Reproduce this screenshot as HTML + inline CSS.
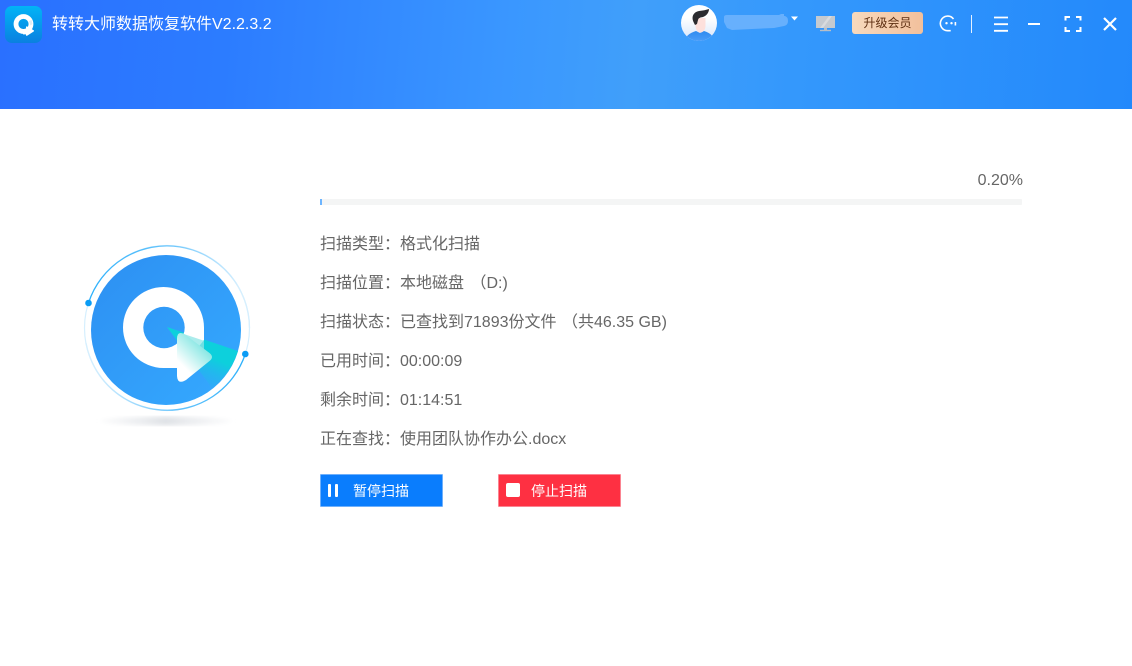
<!DOCTYPE html>
<html><head><meta charset="utf-8"><style>
*{margin:0;padding:0;box-sizing:border-box}
html,body{width:1132px;height:666px;overflow:hidden;background:#fff}
body{position:relative;font-family:"Liberation Sans","Noto Sans CJK SC",sans-serif}
.hd{position:absolute;left:0;top:0;width:1132px;height:109px;background:linear-gradient(95deg,#2a70ff 0%,#2c7cff 20%,#3a97ff 45%,#409ffa 56%,#3498fc 70%,#2389fb 100%)}
.t{position:absolute;white-space:nowrap}
.title{left:52px;top:13px;font-size:16px;line-height:24px;color:#fff}
.row{left:320px;font-size:16px;line-height:22px;color:#666}
.btn{position:absolute;top:474px;width:123px;height:33px;border-radius:1px}
.btn span{position:absolute;left:32px;top:6px;font-size:14px;line-height:20px;color:#fff;white-space:nowrap}
svg{position:absolute}
</style></head><body>
<div class="hd"></div>
<svg style="left:5px;top:6px" width="37" height="37" viewBox="0 0 37 37">
<defs><linearGradient id="a" x1="0" y1="0" x2="0" y2="1"><stop offset="0" stop-color="#02b4f6"/><stop offset="1" stop-color="#0a80e0"/></linearGradient></defs>
<rect width="37" height="37" rx="7" fill="url(#a)"/>
<circle cx="18.500" cy="18" r="7.500" fill="none" stroke="#fff" stroke-width="4.800"/>
<path d="M18 23h4v5.400h-4z" fill="#fff"/>
<path d="M22 20.500Q21 20 21 21V29Q21 30.500 22.500 29.500L28.700 25.500Q29.500 25 28.700 24.300z" fill="#fff"/>
<path d="M24 15l2.500-1 1 4-2 1.500z" fill="#cfe6f4" opacity=".7"/>
</svg>
<div class="t title">转转大师数据恢复软件V2.2.3.2</div>

<svg style="left:681px;top:5px" width="36" height="36" viewBox="0 0 36 36">
<defs><clipPath id="c"><circle cx="18" cy="18" r="18"/></clipPath><linearGradient id="w" x1="0" y1="0" x2="0" y2="1"><stop offset=".35" stop-color="#fff"/><stop offset="1" stop-color="#d5e5fb"/></linearGradient><linearGradient id="bd" x1="0" y1="0" x2="0" y2="1"><stop offset="0" stop-color="#2f8bf0"/><stop offset="1" stop-color="#4a9cf8"/></linearGradient></defs>
<circle cx="18" cy="18" r="18" fill="url(#w)"/>
<g clip-path="url(#c)">
<path d="M4 36c0-4 4-8 11-10l4 2 4-2c7 2 10 6 10 10z" fill="url(#bd)"/>
<path d="M14.500 13h10v8c0 3-2 6.500-5 6.500s-5-3.500-5-6.500z" fill="#fde0dc"/>
<path d="M12.500 17C10 11 13 7 18 6C22 5.500 25 5 28 4C28 8 25 11 22 12C19 12.500 17.500 13 17 15L16 19L14 20Z" fill="#2b2b2f"/>
</g></svg>
<svg style="left:724px;top:14px" width="70" height="18" viewBox="0 0 70 18">
<path d="M0 3q0-2 3-2h52l2-1h3v2h1q3 1 3 5q0 4-4 5l-10 2-22 1-20 1-5-2-3-6z" fill="#67b0fd"/>
</svg>
<svg style="left:790px;top:16px" width="9" height="6" viewBox="0 0 9 6"><path d="M1 .500h7l-3.500 4z" fill="#fff"/></svg>
<svg style="left:815px;top:15px" width="21" height="17" viewBox="0 0 21 17">
<rect x="1" y="1" width="19" height="12" fill="#c5cad0"/><path d="M5 13 14 1h3L8 13z" fill="#d8dbde"/>
<rect x="9" y="13" width="3" height="2" fill="#b7bec6"/><rect x="5" y="14.800" width="11" height="1.400" fill="#b7bec6"/>
</svg>
<div style="position:absolute;left:852px;top:12px;width:71px;height:22px;border-radius:3px;background:linear-gradient(90deg,#f7d9bd,#f2c09c)"></div>
<div class="t" style="left:852px;top:12px;width:71px;text-align:center;font-size:12px;line-height:22px;color:#5e2f12">升级会员</div>
<svg style="left:938px;top:15px" width="20" height="18" viewBox="0 0 20 18" fill="none" stroke="#fff" stroke-width="1.600">
<path d="M15.500 4A7.300 7.300 0 1 0 9.700 15.700h3"/><path d="M17.400 7v3.500"/><circle cx="8.500" cy="8.200" r="1.200" fill="#fff" stroke="none"/><circle cx="13.500" cy="8.200" r="1.200" fill="#fff" stroke="none"/>
</svg>
<div style="position:absolute;left:971px;top:15px;width:1px;height:18px;background:#e5f1ff"></div>
<svg style="left:992px;top:15px" width="18" height="18" viewBox="0 0 18 18" stroke="#fff" stroke-width="1.800"><path d="M2 2.500h14M2 9.200h14M2 15.800h14"/></svg>
<div style="position:absolute;left:1028px;top:23px;width:12px;height:2px;background:#fff"></div>
<svg style="left:1064px;top:15px" width="18" height="18" viewBox="0 0 18 18" fill="none" stroke="#fff" stroke-width="2"><path d="M1.500 5.500V2h4.500M12 2h4.500v3.500M16.500 12v4H12M6 16H1.500V12"/></svg>
<svg style="left:1102px;top:16px" width="16" height="16" viewBox="0 0 16 16" stroke="#fff" stroke-width="2.200"><path d="M2 2l12 12M14 2L2 14"/></svg>

<div class="t" style="right:109px;top:170px;font-size:16px;line-height:22px;color:#666">0.20%</div>
<div style="position:absolute;left:320px;top:199px;width:702px;height:6px;background:#f4f5f5;border-radius:1px"></div>
<div style="position:absolute;left:320px;top:199px;width:2px;height:6px;background:#6db5ff"></div>

<div class="t row" style="top:234px">扫描类型：格式化扫描</div>
<div class="t row" style="top:273px">扫描位置：本地磁盘 <span style="margin-left:2px">（</span>D:)</div>
<div class="t row" style="top:312px">扫描状态：已查找到71893份文件 <span style="margin-left:1px">（</span>共46.35 GB)</div>
<div class="t row" style="top:351px">已用时间：00:00:09</div>
<div class="t row" style="top:390px">剩余时间：01:14:51</div>
<div class="t row" style="top:429px">正在查找：使用团队协作办公.docx</div>

<div class="btn" style="left:320px;background:#0a7dfd;border:1px solid #6fb0fb"><span>暂停扫描</span></div>
<div style="position:absolute;left:328px;top:484px;width:3px;height:13px;background:#fff;border-radius:1px"></div>
<div style="position:absolute;left:335px;top:484px;width:3px;height:13px;background:#fff;border-radius:1px"></div>
<div class="btn" style="left:498px;background:#fe3042;border:1px solid #fb8491"><span>停止扫描</span></div>
<div style="position:absolute;left:506px;top:483px;width:14px;height:14px;background:#fff;border-radius:2px"></div>

<svg style="left:70px;top:235px" width="190" height="200" viewBox="0 0 190 200">
<defs>
<linearGradient id="b" x1="0" y1="0" x2="1" y2="1"><stop offset="0" stop-color="#2d8ff2"/><stop offset="1" stop-color="#35aaff"/></linearGradient>
<linearGradient id="p" gradientUnits="userSpaceOnUse" x1="108" y1="138" x2="138" y2="108"><stop offset=".2" stop-color="#fff"/><stop offset="1" stop-color="#6fe2de"/></linearGradient>
<linearGradient id="tl" gradientUnits="userSpaceOnUse" x1="150" y1="105" x2="128" y2="155"><stop offset=".35" stop-color="#0dd0dc"/><stop offset="1" stop-color="#2fa8f8" stop-opacity=".2"/></linearGradient>
<linearGradient id="s" x1="0" y1="0" x2="1" y2="0"><stop offset="0" stop-color="#e8eaee" stop-opacity=".2"/><stop offset=".5" stop-color="#dfe2e6"/><stop offset="1" stop-color="#e8eaee" stop-opacity=".2"/></linearGradient>
<linearGradient id="u" gradientUnits="userSpaceOnUse" x1="18" y1="60" x2="170" y2="60"><stop offset="0" stop-color="#2bb0fb"/><stop offset=".55" stop-color="#6cc6fc"/><stop offset="1" stop-color="#d6effe"/></linearGradient>
<linearGradient id="l" gradientUnits="userSpaceOnUse" x1="175" y1="120" x2="25" y2="150"><stop offset="0" stop-color="#2bb0fb"/><stop offset=".55" stop-color="#6cc6fc"/><stop offset="1" stop-color="#d6effe"/></linearGradient>
<filter id="bl"><feGaussianBlur stdDeviation="2"/></filter>
</defs>
<ellipse cx="96" cy="186" rx="66" ry="4.500" fill="url(#s)" filter="url(#bl)"/>
<circle cx="97" cy="93" r="82.500" fill="none" stroke="#d6effe" stroke-width="1.200"/>
<path d="M18.500 68A82.500 82.500 0 0 1 179.500 93" fill="none" stroke="url(#u)" stroke-width="1.300"/>
<path d="M175.300 119A82.500 82.500 0 0 1 16 108" fill="none" stroke="url(#l)" stroke-width="1.300"/>
<circle cx="18.500" cy="68" r="3.300" fill="#0a9cf5"/>
<circle cx="175.300" cy="119" r="3.300" fill="#0a9cf5"/>
<circle cx="96" cy="95" r="75" fill="url(#b)"/>
<path d="M97 92 168 116A75 75 0 0 1 142 153z" fill="url(#tl)"/>
<path fill-rule="evenodd" fill="#fff" d="M93.500 133A40.500 40.500 0 1 1 134 92.500V105L112 133ZM94 71.800A20.700 20.700 0 1 0 94 113.200A20.700 20.700 0 1 0 94 71.800Z"/>
<path d="M112 98.400 134 105.800V120L112 120z" fill="#8fe6e6" opacity=".75"/>
<path d="M115 99.500Q107 95 107 104V141Q107.500 150 116 145L139.500 126Q144.500 122 139.500 118Z" fill="url(#p)"/>
</svg>
</body></html>
